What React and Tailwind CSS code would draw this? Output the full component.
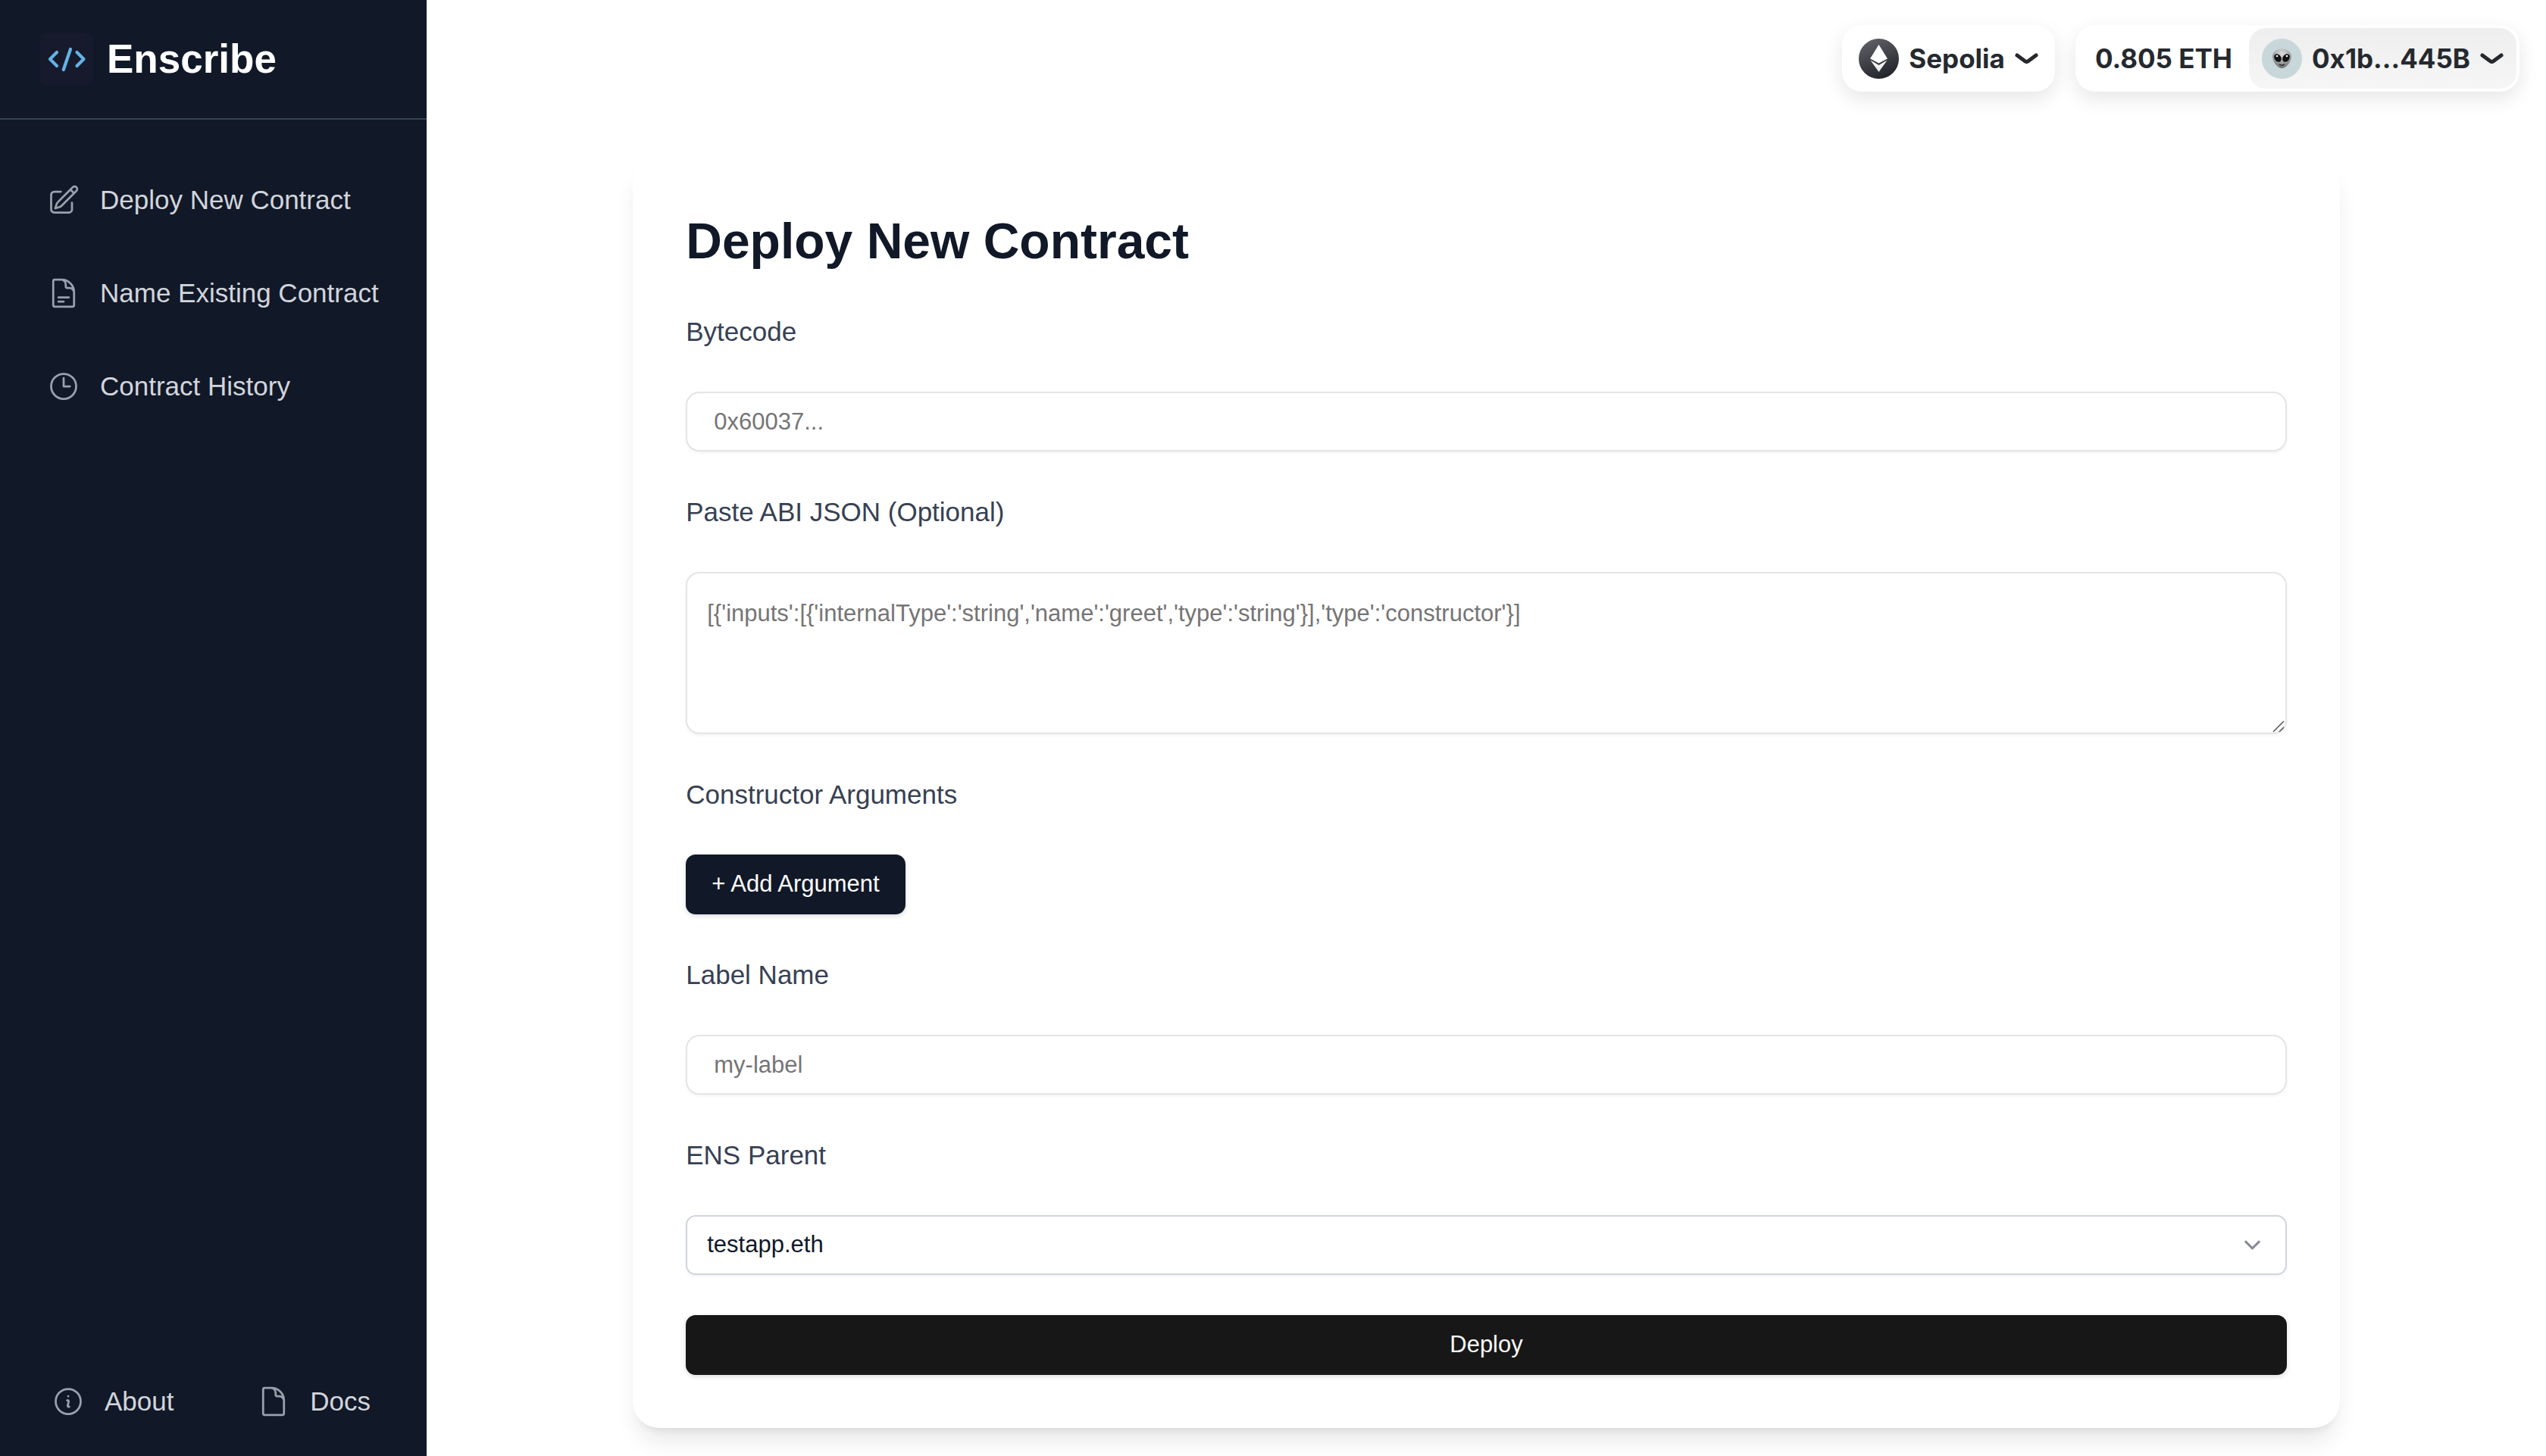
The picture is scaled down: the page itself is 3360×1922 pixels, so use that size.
import React from "react";
import {
  HiOutlinePencilSquare,
  HiOutlineDocumentText,
  HiOutlineClock,
  HiOutlineInformationCircle,
  HiOutlineDocument,
} from "react-icons/hi2";
import { ChevronDown } from "lucide-react";

const NAV_ITEMS = [
  { label: "Deploy New Contract", Icon: HiOutlinePencilSquare },
  { label: "Name Existing Contract", Icon: HiOutlineDocumentText },
  { label: "Contract History", Icon: HiOutlineClock },
];

const FOOTER_ITEMS = [
  { label: "About", Icon: HiOutlineInformationCircle },
  { label: "Docs", Icon: HiOutlineDocument },
];

function Logo() {
  return (
    <svg viewBox="0 0 70 70" className="size-[70px]" aria-hidden="true">
      <rect width="70" height="70" rx="8" fill="#171a2c" />
      <g fill="none" stroke="#63b3e4" strokeWidth="4.2" strokeLinecap="round" strokeLinejoin="round">
        <path d="M22 26 L13 35 L22 44" />
        <path d="M40 22 L30.800 49" />
        <path d="M48.500 26 L57.500 35 L48.500 44" />
      </g>
    </svg>
  );
}

function EthereumIcon() {
  return (
    <svg viewBox="0 0 53 53" className="size-[53px]" aria-hidden="true">
      <defs>
        <linearGradient id="eth-bg" x1="0.3" y1="0" x2="0.7" y2="1">
          <stop offset="0" stopColor="#5f6066" />
          <stop offset="1" stopColor="#1f2228" />
        </linearGradient>
        <linearGradient id="eth-low" x1="0" y1="0" x2="0" y2="1">
          <stop offset="0" stopColor="#ffffff" />
          <stop offset="1" stopColor="#e4e4e4" />
        </linearGradient>
      </defs>
      <circle cx="26.500" cy="26.500" r="26.500" fill="url(#eth-bg)" />
      <path d="M26.500 8 L38 26.500 L26.500 33 L15 26.500 Z" fill="#fff" />
      <path d="M15.500 28.500 L26.500 35 L37.500 28.500 L26.500 44 Z" fill="url(#eth-low)" />
      <path d="M15 26.500 L26.500 32.500 L38 26.500 L37.500 28 L26.500 34.500 L15.500 28 Z" fill="#3c3e44" />
    </svg>
  );
}

function AlienAvatar() {
  return (
    <svg viewBox="0 0 53 53" className="size-[53px]" aria-hidden="true">
      <defs>
        <radialGradient id="alien-skin" cx="0.5" cy="0.25" r="0.75">
          <stop offset="0" stopColor="#dcdddd" />
          <stop offset="0.55" stopColor="#a4a9a8" />
          <stop offset="1" stopColor="#6c7170" />
        </radialGradient>
      </defs>
      <circle cx="26.500" cy="26.500" r="26.500" fill="#c8d7da" />
      <path
        d="M26.500 13.500 C34.500 13.500 39.500 18.500 39 24.500 C38.500 31 32 39 26.500 39 C21 39 14.500 31 14 24.500 C13.500 18.500 18.500 13.500 26.500 13.500 Z"
        fill="url(#alien-skin)"
      />
      <ellipse cx="21" cy="25.500" rx="4.300" ry="5.800" transform="rotate(-35 21 25.500)" fill="#111" />
      <ellipse cx="32" cy="25.500" rx="4.300" ry="5.800" transform="rotate(35 32 25.500)" fill="#111" />
      <circle cx="20" cy="23" r="1.300" fill="#fff" />
      <circle cx="33" cy="23" r="1.300" fill="#fff" />
      <path d="M23.500 34 Q26.500 36.500 29.500 34" fill="none" stroke="#222" strokeWidth="1.500" strokeLinecap="round" />
    </svg>
  );
}

function BoldChevron() {
  return (
    <svg viewBox="0 0 31 15" className="h-[15px] w-[31px]" aria-hidden="true">
      <path
        d="M3 3 L13.500 10.700 Q15.500 12.200 17.500 10.700 L28 3"
        fill="none"
        stroke="#25292e"
        strokeWidth="5"
        strokeLinecap="round"
        strokeLinejoin="round"
      />
    </svg>
  );
}

function Sidebar() {
  return (
    <aside className="flex w-[563px] shrink-0 flex-col bg-[#111827] text-[35px] leading-[53px] text-gray-300">
      <div className="flex h-[158px] items-center gap-[18px] border-b-2 border-gray-700 px-[53px]">
        <Logo />
        <span className="text-[53px] font-bold leading-[70px] text-white">Enscribe</span>
      </div>
      <nav className="flex flex-1 flex-col gap-[18px] px-9 py-[53px]">
        {NAV_ITEMS.map(({ label, Icon }) => (
          <a key={label} href="#" className="flex items-center gap-[26px] p-[26px] whitespace-nowrap">
            <Icon className="size-[44px] shrink-0 text-gray-400" />
            {label}
          </a>
        ))}
      </nav>
      <div className="flex justify-between pr-[74px] pb-[46px] pl-[68px]">
        {FOOTER_ITEMS.map(({ label, Icon }) => (
          <a key={label} href="#" className="flex items-center gap-[26px]">
            <Icon className="size-[44px] shrink-0 text-gray-400" />
            {label}
          </a>
        ))}
      </div>
    </aside>
  );
}

function WalletBar() {
  return (
    <header className="flex justify-end gap-[27px] px-[35px] pt-[33px] font-[Inter,sans-serif] text-[35px] font-bold leading-[44px] text-[#25292e]">
      <button
        type="button"
        className="flex h-[88px] items-center gap-[13px] rounded-[26px] bg-white px-[22px] shadow-[0_9px_26px_rgba(0,0,0,0.1)]"
      >
        <EthereumIcon />
        Sepolia
        <BoldChevron />
      </button>
      <div className="flex h-[88px] items-center rounded-[26px] bg-white p-1 shadow-[0_9px_26px_rgba(0,0,0,0.1)]">
        <span className="px-[22px]">0.805 ETH</span>
        <button
          type="button"
          className="flex h-full items-center gap-[13px] rounded-[22px] bg-linear-to-b from-[#eeeeee] to-[#f6f6f6] px-[17px]"
        >
          <AlienAvatar />
          0x1b...445B
          <BoldChevron />
        </button>
      </div>
    </header>
  );
}

function Field({ id, label, children }) {
  return (
    <div className="flex flex-col gap-[53px]">
      <label htmlFor={id} className="text-[35px] leading-[53px] text-gray-700">
        {label}
      </label>
      {children}
    </div>
  );
}

function TextInput({ id, placeholder }) {
  return (
    <input
      id={id}
      type="text"
      placeholder={placeholder}
      className="h-[79px] w-full rounded-[18px] border-2 border-[#e5e5e5] bg-white px-[35px] text-[31px] text-gray-900 shadow-[0_2px_4px_rgba(0,0,0,0.05)] placeholder:text-[#757575]"
    />
  );
}

function DeployForm() {
  return (
    <form className="flex w-5/6 flex-col gap-[53px] rounded-[35px] bg-white p-[70px] shadow-[0_22px_33px_-7px_rgba(0,0,0,0.1),0_9px_13px_-9px_rgba(0,0,0,0.1)]">
      <h1 className="text-[66px] font-bold leading-[79px] text-[#111827]">Deploy New Contract</h1>

      <Field id="bytecode" label="Bytecode">
        <TextInput id="bytecode" placeholder="0x60037..." />
      </Field>

      <Field id="abi" label="Paste ABI JSON (Optional)">
        <div className="relative flex">
          <textarea
            id="abi"
            placeholder="[{'inputs':[{'internalType':'string','name':'greet','type':'string'}],'type':'constructor'}]"
            className="h-[214px] w-full resize-none rounded-[18px] border-2 border-[#e5e5e5] bg-white p-[26px] text-[31px] leading-[53px] text-gray-900 shadow-[0_2px_4px_rgba(0,0,0,0.05)] placeholder:text-[#757575]"
          />
          <svg viewBox="0 0 16 16" className="absolute right-[3px] bottom-[2px] size-4" aria-hidden="true">
            <path d="M1 15 L15 1 M9 15 L15 9" stroke="#555" strokeWidth="1.500" fill="none" />
          </svg>
        </div>
      </Field>

      <Field id="add-argument" label="Constructor Arguments">
        <button
          id="add-argument"
          type="button"
          className="h-[79px] self-start rounded-[13px] bg-[#111827] px-[34px] text-[31px] text-white shadow-[0_2px_6px_rgba(0,0,0,0.15)]"
        >
          + Add Argument
        </button>
      </Field>

      <Field id="label-name" label="Label Name">
        <TextInput id="label-name" placeholder="my-label" />
      </Field>

      <Field id="ens-parent" label="ENS Parent">
        <div className="relative">
          <select
            id="ens-parent"
            className="block h-[79px] w-full appearance-none rounded-[13px] border-2 border-gray-300 bg-white px-[26px] text-[31px] text-gray-900 shadow-[0_2px_4px_rgba(0,0,0,0.05)]"
          >
            <option>testapp.eth</option>
          </select>
          <ChevronDown className="pointer-events-none absolute top-[22px] right-[28px] size-[35px] text-[#888a93]" />
        </div>
      </Field>

      <button
        type="submit"
        className="h-[79px] w-full rounded-[13px] bg-[#171717] text-[31px] text-neutral-50 shadow-[0_2px_6px_rgba(0,0,0,0.15)]"
      >
        Deploy
      </button>
    </form>
  );
}

export default function App() {
  return (
    <div className="flex min-h-screen bg-white font-['Liberation_Sans',Arial,sans-serif]">
      <Sidebar />
      <div className="flex min-w-0 flex-1 flex-col">
        <WalletBar />
        <main className="flex justify-center px-[47px] pt-[88px]">
          <DeployForm />
        </main>
      </div>
    </div>
  );
}
